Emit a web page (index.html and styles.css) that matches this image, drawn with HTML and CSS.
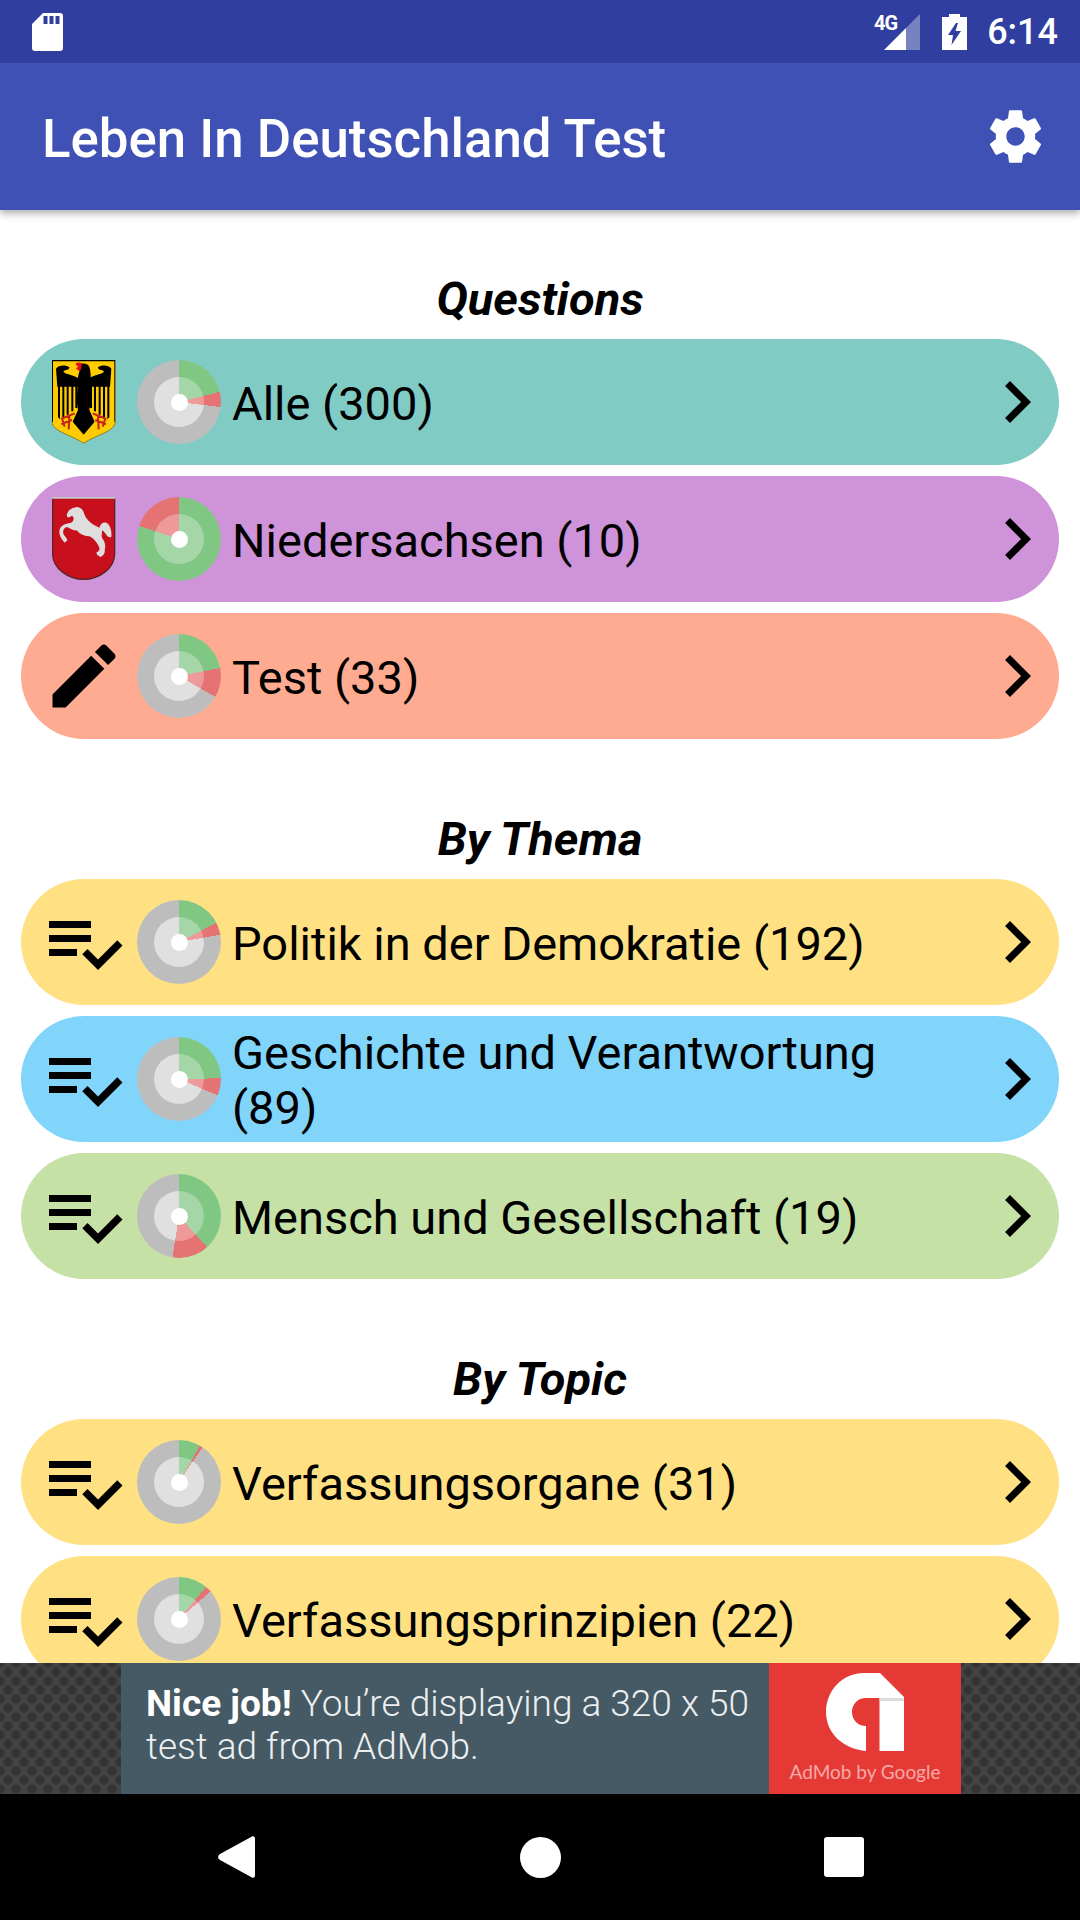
FILE: index.html
```html
<!DOCTYPE html>
<html lang="en">
<head>
  <meta charset="UTF-8" />
  <meta name="viewport" content="width=device-width, initial-scale=1.0"/>
  <title>Leben In Deutschland Test</title>
  <link rel="stylesheet" href="styles.css">
</head>
<body>

  <svg class="icon-defs">
    <symbol id="chevron" viewBox="0 0 24 24"><path d="M10 6L8.59 7.41 13.17 12l-4.58 4.59L10 18l6-6z"/></symbol>
    <symbol id="checklist" viewBox="0 0 24 24"><path d="M14 10H2v2h12v-2zm0-4H2v2h12V6zM2 16h8v-2H2v2zm19.5-4.5L23 13l-6.99 7-4.51-4.5L13 14l3.01 3 5.49-5.5z"/></symbol>
  </svg>

  <header class="status-bar">
    <svg class="sd-icon" viewBox="0 0 31 38"><path fill-rule="evenodd" d="M11 0H28a3 3 0 0 1 3 3V35a3 3 0 0 1-3 3H3a3 3 0 0 1-3-3V11zM11.500 3V11H15.500V3zM17.500 3V11H21.500V3zM23.500 3V11H27.500V3z"/></svg>
    <div class="status-right">
      <span class="net-label">4G</span>
      <svg class="signal-icon" viewBox="0 0 36 36">
        <path d="M36 0V36H22V14z" opacity="0.35"/>
        <path d="M22 14V36H0z"/>
      </svg>
      <svg class="battery-icon" viewBox="0 0 25 36"><path fill-rule="evenodd" d="M7 0H18V3H25V36H0V3H7zM14 9L6 21H11L9.500 31L19 17H13.500L16 9z"/></svg>
      <span class="clock">6:14</span>
    </div>
  </header>

  <div class="app-bar">
    <h1>Leben In Deutschland Test</h1>
    <svg class="gear-icon" viewBox="0 0 24 24"><path d="M19.430 12.980c.04-.32.07-.64.07-.98s-.03-.66-.07-.98l2.110-1.650c.19-.15.24-.42.12-.64l-2-3.460c-.12-.22-.39-.30-.61-.22l-2.490 1c-.52-.40-1.080-.73-1.690-.98l-.38-2.650C14.460 2.180 14.250 2 14 2h-4c-.25 0-.46.18-.49.42l-.38 2.650c-.61.25-1.170.59-1.690.98l-2.490-1c-.23-.09-.49 0-.61.22l-2 3.460c-.13.22-.07.49.12.64l2.110 1.650c-.04.32-.07.65-.07.98s.03.66.07.98l-2.110 1.650c-.19.15-.24.42-.12.64l2 3.460c.12.22.39.30.61.22l2.490-1c.52.40 1.080.73 1.690.98l.38 2.650c.03.24.24.42.49.42h4c.25 0 .46-.18.49-.42l.38-2.650c.61-.25 1.170-.59 1.690-.98l2.490 1c.23.09.49 0 .61-.22l2-3.460c.12-.22.07-.49-.12-.64l-2.110-1.650zM12 15.500c-1.930 0-3.500-1.570-3.500-3.500s1.570-3.500 3.500-3.500 3.500 1.570 3.500 3.500-1.570 3.500-3.500 3.500z"/></svg>
  </div>

  <main class="content">

    <section class="group">
      <h2>Questions</h2>

      <a class="pill teal">
        <!-- federal eagle -->
        <svg class="row-icon" viewBox="-30 0 252 252">
          <path d="M0 0H190V185C190 215 130 225 95 250C60 225 0 215 0 185Z" fill="#ffcc00"/>
          <path d="M190 185C190 215 130 225 95 250C60 225 0 215 0 185" fill="none" stroke="#8a7a3a" stroke-width="3"/>
          <path d="M0 0H190V185H187V4H3V185H0z" fill="#000"/>
          <path d="M12 26C20 14 42 14 52 22C52 32 40 28 34 34C36 42 58 44 78 54V80H16zM178 26C170 14 148 14 138 22C138 32 150 28 156 34C154 42 132 44 112 54V80H174z" fill="#000"/>
          <path d="M18 76H24V178L18 172zM31 76H37V172H31zM44 76H50V164H44zM58 76H64V154H58zM70 76H76V144H70zM172 76H166V178L172 172zM159 76H153V172H159zM146 76H140V164H146zM132 76H126V154H132zM120 76H114V144H120z" fill="#000"/>
          <path d="M78 50C80 40 84 34 82 26C78 26 76 22 80 16C88 8 106 8 112 20C115 30 116 40 116 50V125L112 150L128 185L95 224L62 185L78 150L74 125Z" fill="#000"/>
          <path d="M70 12C74 6 84 6 90 10L88 24L84 34L72 26L78 20Z" fill="#e0101c"/>
          <path d="M68 160L30 176L38 200M52 168L50 208M60 180L28 192M122 160L160 176L152 200M138 168L140 208M130 180L162 192" fill="none" stroke="#c8201a" stroke-width="6"/>
        </svg>
        <span class="score" style="--g:76deg;--r:97deg"></span>
        <span class="pill-text">Alle (300)</span>
        <svg class="chevron"><use href="#chevron"/></svg>
      </a>

      <a class="pill purple">
        <!-- lower saxony horse -->
        <svg class="row-icon" viewBox="-30 0 252 252">
          <path d="M2 3H188V170C188 215 140 247 95 247C50 247 2 215 2 170Z" fill="#c8101c" stroke="#5b2325" stroke-width="4"/>
          <path d="M0 0H190V5H0z" fill="#c9c9c9"/>
          <path d="M46 49C50 38 60 32 76 30C88 32 94 40 97 52C102 66 112 76 126 84L142 92C146 80 154 74 164 78C174 84 180 100 178 120C172 122 166 120 162 112C158 106 154 102 150 100C150 110 148 116 150 122C158 132 162 146 158 158C160 166 156 174 146 180C138 178 132 172 134 166C140 162 144 160 142 152C136 138 124 122 112 118C98 118 84 112 74 100C64 102 52 92 44 90C36 92 32 100 34 110C38 118 46 124 46 130L38 137C30 128 22 116 22 104C22 92 30 84 44 80C52 78 60 80 64 70C66 64 64 58 60 56C56 58 50 64 46 60C44 56 44 52 46 49Z" fill="#dedede"/>
        </svg>
        <span class="score" style="--g:288deg;--r:360deg"></span>
        <span class="pill-text">Niedersachsen (10)</span>
        <svg class="chevron"><use href="#chevron"/></svg>
      </a>

      <a class="pill salmon">
        <svg class="row-icon" viewBox="0 0 24 24"><path d="M3 17.250V21h3.750L17.810 9.940l-3.750-3.750L3 17.250zM20.710 7.040c.39-.39.39-1.020 0-1.410l-2.340-2.340c-.39-.39-1.020-.39-1.410 0l-1.830 1.830 3.750 3.750 1.830-1.830z"/></svg>
        <span class="score" style="--g:79deg;--r:120deg"></span>
        <span class="pill-text">Test (33)</span>
        <svg class="chevron"><use href="#chevron"/></svg>
      </a>
    </section>

    <section class="group">
      <h2>By Thema</h2>

      <a class="pill yellow">
        <svg class="row-icon"><use href="#checklist"/></svg>
        <span class="score" style="--g:63deg;--r:80deg"></span>
        <span class="pill-text">Politik in der Demokratie (192)</span>
        <svg class="chevron"><use href="#chevron"/></svg>
      </a>

      <a class="pill blue">
        <svg class="row-icon"><use href="#checklist"/></svg>
        <span class="score" style="--g:89deg;--r:113deg"></span>
        <span class="pill-text">Geschichte und Verantwortung (89)</span>
        <svg class="chevron"><use href="#chevron"/></svg>
      </a>

      <a class="pill green">
        <svg class="row-icon"><use href="#checklist"/></svg>
        <span class="score" style="--g:138deg;--r:189deg"></span>
        <span class="pill-text">Mensch und Gesellschaft (19)</span>
        <svg class="chevron"><use href="#chevron"/></svg>
      </a>
    </section>

    <section class="group">
      <h2>By Topic</h2>

      <a class="pill yellow">
        <svg class="row-icon"><use href="#checklist"/></svg>
        <span class="score" style="--g:30deg;--r:34deg"></span>
        <span class="pill-text">Verfassungsorgane (31)</span>
        <svg class="chevron"><use href="#chevron"/></svg>
      </a>

      <a class="pill yellow">
        <svg class="row-icon"><use href="#checklist"/></svg>
        <span class="score" style="--g:40deg;--r:49deg"></span>
        <span class="pill-text">Verfassungsprinzipien (22)</span>
        <svg class="chevron"><use href="#chevron"/></svg>
      </a>
    </section>

  </main>

  <div class="ad-strip">
    <div class="ad-banner">
      <div class="ad-text">
        <div class="ad-line"><b>Nice job!</b> <span>You’re displaying a 320 x 50</span></div>
        <div class="ad-line">test ad from AdMob.</div>
      </div>
      <div class="ad-logo">
        <svg class="admob-mark" viewBox="0 0 78 78">
          <path d="M40 78C17 76 0 60 0 39C0 17 17 0 38 0H54L78 24V78H53.500V25H40C32 25 26 31 26 39C26 47 32 53 40 53Z"/>
          <path d="M53.500 25H78V28H53.500z" fill="#dcdcdc"/>
        </svg>
        <span class="ad-brand">AdMob by Google</span>
      </div>
    </div>
  </div>

  <nav class="nav-bar">
    <span class="nav-slot"><svg class="nav-back" viewBox="0 0 37 42"><path d="M34 0.500C36 -0.500 37 1 37 3V39C37 41 36 42.500 34 41.500L2 24C-0.500 22.500 -0.500 19.500 2 18Z"/></svg></span>
    <span class="nav-slot"><span class="nav-home"></span></span>
    <span class="nav-slot"><span class="nav-recent"></span></span>
  </nav>

</body>
</html>
```

FILE: styles.css
```css
html, body {
  height: 100%;
}

body {
  margin: 0;
  width: 1080px;
  height: 1920px;
  display: flex;
  flex-direction: column;
  overflow: hidden;
  background-color: #fff;
  font-family: Roboto, 'Noto Sans', sans-serif;
  color: #000;
}

.icon-defs {
  display: none;
}

/* status bar */
.status-bar {
  height: 63px;
  flex-shrink: 0;
  display: flex;
  align-items: center;
  justify-content: space-between;
  padding: 0 22px 0 32px;
  background-color: #303f9f;
  color: #fff;
  fill: #fff;
  position: relative;
  z-index: 11;
}

.sd-icon {
  width: 31px;
  height: 38px;
}

.status-right {
  display: flex;
  align-items: center;
}

.net-label {
  align-self: flex-start;
  margin: 2px -13px 0 0;
  font-size: 20px;
  font-weight: 700;
  line-height: 20px;
  letter-spacing: -1px;
}

.signal-icon {
  width: 36px;
  height: 36px;
}

.battery-icon {
  width: 25px;
  height: 36px;
  margin-left: 22px;
}

.clock {
  margin-left: 20px;
  font-size: 36px;
  font-weight: 500;
}

/* app bar */
.app-bar {
  height: 147px;
  flex-shrink: 0;
  display: flex;
  align-items: center;
  justify-content: space-between;
  padding: 0 6px 0 42px;
  box-sizing: border-box;
  background-color: #3f51b5;
  box-shadow: 0 3px 8px rgba(0, 0, 0, 0.35);
  position: relative;
  z-index: 10;
}

.app-bar h1 {
  margin: 4px 0 0;
  font-size: 52.8px;
  font-weight: 500;
  color: #fff;
}

.gear-icon {
  width: 63px;
  height: 63px;
  margin-right: 27px;
  fill: #fff;
}

/* list */
.content {
  flex: 1;
  min-height: 0;
  overflow: hidden;
  padding: 62px 21px 0;
}

.group {
  margin-bottom: 73px;
}

.group h2 {
  margin: 0 0 13px;
  height: 54px;
  font-size: 47px;
  line-height: 54px;
  font-weight: 700;
  font-style: italic;
  text-align: center;
}

.pill {
  height: 126px;
  display: flex;
  align-items: center;
  margin-bottom: 11px;
  padding-left: 21px;
  border-radius: 63px;
}

.teal { background-color: #80cbc4; }
.purple { background-color: #ce93d8; }
.salmon { background-color: #ffab91; }
.yellow { background-color: #ffe082; }
.blue { background-color: #81d4fa; }
.green { background-color: #c5e1a5; }

.row-icon {
  width: 84px;
  height: 84px;
  flex-shrink: 0;
  margin-right: 11px;
}

.score {
  width: 84px;
  height: 84px;
  flex-shrink: 0;
  margin-right: 11px;
  position: relative;
  border-radius: 50%;
  background: conic-gradient(#81c784 var(--g), #e57373 var(--g) var(--r), #bdbdbd var(--r));
}

.score::before {
  content: "";
  position: absolute;
  inset: 17px;
  border-radius: 50%;
  background: conic-gradient(#a5d6a7 var(--g), #ef9a9a var(--g) var(--r), #e0e0e0 var(--r));
}

.score::after {
  content: "";
  position: absolute;
  inset: 33.5px;
  border-radius: 50%;
  background-color: #fff;
}

.pill-text {
  flex: 1;
  font-size: 47px;
  line-height: 55px;
  padding: 2px 12px 0 0;
}

.chevron {
  width: 84px;
  height: 84px;
  flex-shrink: 0;
}

/* ad */
.ad-strip {
  height: 131px;
  flex-shrink: 0;
  display: flex;
  justify-content: center;
  background-color: #444;
  background-image: radial-gradient(circle, #333 3px, transparent 6px), radial-gradient(circle, #333 3px, transparent 6px);
  background-size: 16px 18px;
  background-position: 0 0, 8px 9px;
  position: relative;
  z-index: 5;
}

.ad-banner {
  width: 840px;
  margin-left: 2px;
  display: flex;
  background-color: #455a64;
}

.ad-text {
  flex: 1;
  padding: 19px 0 0 25px;
  font-size: 37px;
  font-weight: 300;
  line-height: 43px;
  color: #eceff1;
}

.ad-text b {
  font-weight: 700;
  color: #fff;
}

.ad-logo {
  width: 192px;
  display: flex;
  flex-direction: column;
  align-items: center;
  padding-top: 10px;
  box-sizing: border-box;
  background-color: #e53935;
}

.admob-mark {
  width: 78px;
  height: 78px;
  fill: #fff;
}

.ad-brand {
  margin-top: 9px;
  font-family: Lato, Roboto, sans-serif;
  font-size: 19px;
  line-height: 24px;
  color: #f5a9a7;
}

/* navigation */
.nav-bar {
  height: 126px;
  flex-shrink: 0;
  display: flex;
  justify-content: center;
  align-items: center;
  background-color: #000;
}

.nav-slot {
  width: 304px;
  display: flex;
  justify-content: center;
  align-items: center;
}

.nav-back {
  width: 37px;
  height: 42px;
  fill: #fff;
}

.nav-home {
  width: 41px;
  height: 41px;
  border-radius: 50%;
  background-color: #fff;
}

.nav-recent {
  width: 40px;
  height: 40px;
  border-radius: 3px;
  background-color: #fff;
}
```
